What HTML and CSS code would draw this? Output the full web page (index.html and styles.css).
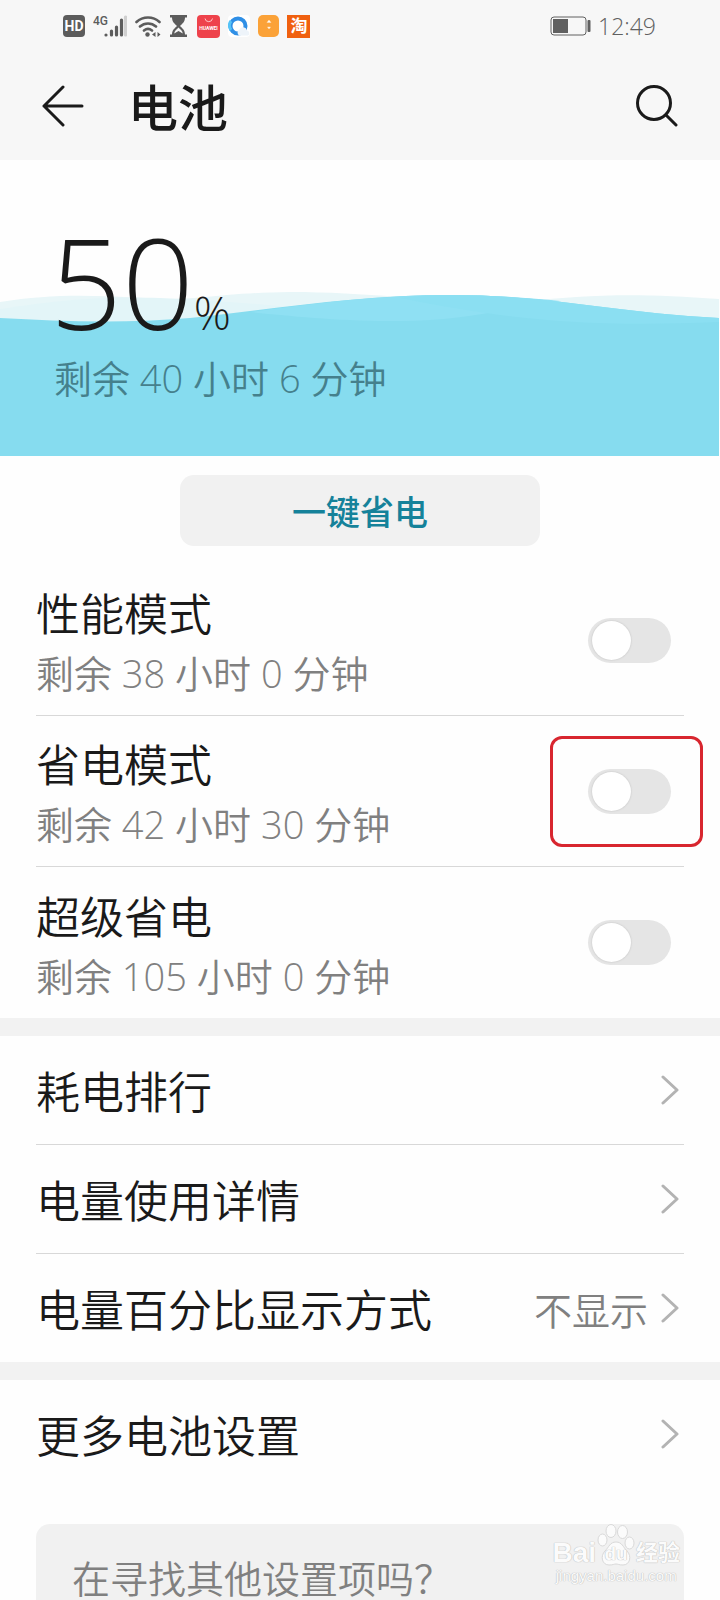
FILE: index.html
```html
<!DOCTYPE html>
<html lang="zh-CN">
<head>
    <meta charset="utf-8">
    <title>电池</title>
    <meta name="viewport" content="width=device-width, initial-scale=1.0">
    <link rel="stylesheet" href="styles.css">
</head>
<body>
<div class="screen">
    <header class="header">
        <div class="statusbar">
            <div class="status-icons">
                <svg width="22" height="24" viewBox="0 0 22 24">
                    <rect y="1" width="22" height="22" rx="4" fill="#5c5c5c"/>
                    <text x="11" y="17" class="hd">HD</text>
                </svg>
                <svg width="34" height="24" viewBox="0 0 34 24">
                    <text x="0" y="11" class="net">4G</text>
                    <g stroke="#5c5c5c" stroke-width="3.200" stroke-linecap="round">
                        <path d="M13 21v0M18.500 21v-4M23.500 21v-8M28.500 21V6"/>
                        <path d="M32.500 21V3" stroke="#cfcfcf"/>
                    </g>
                </svg>
                <svg width="26" height="24" viewBox="0 0 26 24" fill="none" stroke="#5c5c5c" stroke-width="2.600" stroke-linecap="round">
                    <path d="M1.500 8a17 17 0 0 1 23 0M5 12.500a12 12 0 0 1 16 0M9 16.500a6.500 6.500 0 0 1 8 0"/>
                    <circle cx="12.500" cy="20.500" r="2.200" fill="#5c5c5c" stroke="none"/>
                    <path d="M17 20.500l3.500-2.500v5zM25.500 20.500L22.500 18v5z" fill="#5c5c5c" stroke="none"/>
                </svg>
                <svg width="20" height="24" viewBox="0 0 20 24">
                    <path d="M1 1h17v2.500h-2C16 8 13 10 11 12c2 2 5 4 5 8.500h2V23H1v-2.500h2C3 16 6 14 8 12 6 10 3 8 3 3.500H1z" fill="#5c5c5c"/>
                    <path d="M9.500 13.500c2 2 4 3.500 4.300 6L9.500 17l-4.300 2.500c.3-2.500 2.300-4 4.300-6z" fill="#f7f7f7"/>
                </svg>
                <svg width="23" height="24" viewBox="0 0 23 24">
                    <rect width="23" height="23" rx="4" y="1" fill="#ee424b"/>
                    <path d="M8 4.500a3.800 3.800 0 0 0 7.500 0" fill="none" stroke="#ffc4c4"/>
                    <text x="11.500" y="16" class="brand">HUAWEI</text>
                </svg>
                <svg width="22" height="24" viewBox="0 0 22 24">
                    <rect width="22" height="22" y="1" rx="4" fill="#fff"/>
                    <circle cx="10" cy="12" r="7.500" fill="#fff" stroke="#2f8fe6" stroke-width="4"/>
                    <path d="M3 16a7.500 7.500 0 0 1 0-9" fill="none" stroke="#56c3f7" stroke-width="3"/>
                    <path d="M11 21.500a3.500 3.500 0 0 1 .5-6 4 4 0 0 1 7.500 1 2.700 2.700 0 0 1 1 5z" fill="#eef4fa"/>
                </svg>
                <svg width="21" height="24" viewBox="0 0 21 24">
                    <rect width="21" height="22" y="1" rx="5" fill="#fba238"/>
                    <path d="M9 8.500l2-2.500 2 2.500zM9.500 13h3l-1.500 2z" fill="#fff" stroke="#ffe3bd" stroke-width=".5"/>
                </svg>
                <svg width="23" height="24" viewBox="0 0 23 24">
                    <rect width="23" height="23" y="1" fill="#f0600f"/>
                    <text x="12" y="18" class="tao">淘</text>
                </svg>
            </div>
            <div class="status-right">
                <svg width="42" height="20" viewBox="0 0 42 20">
                    <rect x="1" y="1" width="35" height="18" rx="3" fill="none" stroke="#606060"/>
                    <rect x="3" y="3" width="15" height="14" fill="#606060"/>
                    <rect x="37.500" y="4" width="3" height="12" rx="1" fill="#606060"/>
                </svg>
                <span>12:49</span>
            </div>
        </div>
        <div class="titlebar">
            <button class="icon-btn" aria-label="返回">
                <svg width="42" height="42" viewBox="0 0 42 42" fill="none" stroke="#1a1a1a" stroke-width="3" stroke-linecap="round" stroke-linejoin="round">
                    <path d="M40 21H2M21 2L2 21l19 19"/>
                </svg>
            </button>
            <h1>电池</h1>
            <button class="icon-btn" aria-label="搜索">
                <svg width="42" height="42" viewBox="0 0 42 42" fill="none" stroke="#1a1a1a" stroke-width="3" stroke-linecap="round">
                    <circle cx="18" cy="18" r="16.500"/>
                    <path d="M30 30L40 40"/>
                </svg>
            </button>
        </div>
    </header>

    <section class="hero">
        <svg class="waves" viewBox="0 0 720 168" preserveAspectRatio="none">
            <path d="M0 14C50 6 90 7 140 10C200 14 210 5 290 4C370 4 430 14 520 14C590 6 640 5 719 11V60H0z" fill="#e8f6f8"/>
            <path d="M0 21C60 12 100 8 160 10C200 12 240 14 300 20V60H0z" fill="#e3f5f8"/>
            <path d="M0 30C60 33 120 36 190 30C280 20 360 7 450 7C550 7 610 24 719 30V168H0z" fill="#86dcef"/>
            <path d="M250 24C330 13 390 7 450 7C490 7 530 10 560 13C500 22 460 33 400 33C340 33 300 29 250 24z" fill="#8fe0f3"/>
            <path d="M400 10C500 30 580 40 719 34V30C610 24 550 7 450 7C430 7 415 8 400 10z" fill="#8bdff2"/>
        </svg>
        <div class="level">50<span class="unit">%</span></div>
        <p class="remain">剩余 40 小时 6 分钟</p>
    </section>

    <div class="save-wrap">
        <button class="save">一键省电</button>
    </div>

    <section class="group">
        <div class="row mode">
            <label for="perf"><span class="name">性能模式</span><span class="note">剩余 38 小时 0 分钟</span></label>
            <div class="toggle"><input type="checkbox" id="perf"></div>
        </div>
        <div class="row mode">
            <label for="saver"><span class="name">省电模式</span><span class="note">剩余 42 小时 30 分钟</span></label>
            <div class="toggle marked"><input type="checkbox" id="saver"></div>
        </div>
        <div class="row mode">
            <label for="ultra"><span class="name">超级省电</span><span class="note">剩余 105 小时 0 分钟</span></label>
            <div class="toggle"><input type="checkbox" id="ultra"></div>
        </div>
    </section>

    <nav class="group">
        <a class="row link" href="#rank">
            <span class="name">耗电排行</span>
            <svg class="chevron" viewBox="0 0 18 30"><path d="M2 2l14 13L2 28"/></svg>
        </a>
        <a class="row link" href="#usage">
            <span class="name">电量使用详情</span>
            <svg class="chevron" viewBox="0 0 18 30"><path d="M2 2l14 13L2 28"/></svg>
        </a>
        <a class="row link" href="#percent">
            <span class="name">电量百分比显示方式</span>
            <span class="value">不显示</span>
            <svg class="chevron" viewBox="0 0 18 30"><path d="M2 2l14 13L2 28"/></svg>
        </a>
    </nav>

    <nav class="group">
        <a class="row link" href="#more">
            <span class="name">更多电池设置</span>
            <svg class="chevron" viewBox="0 0 18 30"><path d="M2 2l14 13L2 28"/></svg>
        </a>
    </nav>

    <section class="tips">
        <p>在寻找其他设置项吗？</p>
    </section>

    <div class="watermark">
        <div class="wm-top">
            <span class="wm-bai">Bai</span>
            <span class="wm-paw">
                <svg width="38" height="42" viewBox="0 0 38 42" fill="#fbfbfb" stroke="#d9d9d9">
                    <ellipse cx="5.500" cy="16" rx="4.500" ry="6"/>
                    <ellipse cx="14" cy="7" rx="5" ry="6.500"/>
                    <ellipse cx="25.500" cy="8" rx="5" ry="6.500"/>
                    <ellipse cx="32.500" cy="19" rx="4.500" ry="6"/>
                    <path d="M19 18c6 0 7 5 11 9 5 5 3 14-4 14-4 0-5-1-7-1s-3 1-7 1c-7 0-9-9-4-14 4-4 5-9 11-9z"/>
                </svg>
                <span class="wm-du">du</span>
            </span>
            <span class="wm-exp">经验</span>
        </div>
        <div class="wm-url">jingyan.baidu.com</div>
    </div>
</div>
</body>
</html>
```
FILE: styles.css
```css
* {
    box-sizing: border-box;
}
body {
    margin: 0;
    background: #fefefe;
    color: #1a1a1a;
    font-family: "Open Sans", "Noto Sans CJK SC", sans-serif;
    font-weight: 300;
}
h1, p {
    margin: 0;
}
button {
    font-family: inherit;
    border: 0;
    padding: 0;
}
.screen {
    position: relative;
    height: 100vh;
    overflow: hidden;
}

/* header */
.header {
    background: #f7f7f7;
    height: 160px;
}
.statusbar {
    display: flex;
    justify-content: space-between;
    align-items: center;
    height: 52px;
    padding: 0 64px 0 63px;
}
.status-icons {
    display: flex;
    gap: 8px;
}
.status-icons text {
    font-family: "Roboto", "Noto Sans CJK SC", sans-serif;
    font-weight: 700;
    text-anchor: middle;
    fill: #fff;
}
.status-icons .hd {
    font-size: 14px;
}
.status-icons .net {
    font-size: 12px;
    font-weight: 500;
    text-anchor: start;
    fill: #5c5c5c;
}
.status-icons .brand {
    font-size: 5px;
}
.status-icons .tao {
    font-size: 17px;
}
.status-right {
    display: flex;
    align-items: center;
    gap: 6px;
    font-size: 23px;
    color: #606060;
}
.titlebar {
    display: flex;
    align-items: center;
    height: 108px;
    padding: 0 42px;
}
.titlebar h1 {
    flex: 1;
    margin-left: 44px;
    padding-top: 4px;
    font-size: 50px;
    line-height: 104px;
    font-weight: 500;
}
.icon-btn {
    display: flex;
    background: none;
}

/* battery level */
.hero {
    position: relative;
    height: 296px;
    padding: 52px 54px 0;
}
.waves {
    position: absolute;
    left: 0;
    bottom: 0;
    width: 100%;
    height: 168px;
}
.level {
    position: relative;
    margin-left: -4px;
    font-size: 126px;
    line-height: 138px;
}
.unit {
    font-size: 46px;
    line-height: 46px;
}
.remain {
    position: relative;
    font-size: 38px;
    line-height: 56px;
    font-weight: 350;
    color: #45808c;
}
.save-wrap {
    display: flex;
    justify-content: center;
    padding: 19px 0;
}
.save {
    width: 50%;
    height: 71px;
    border-radius: 14px;
    background: #f1f1f1;
    color: #15829a;
    font-size: 34px;
    font-weight: 500;
}

/* list rows */
.group + .group {
    border-top: 18px solid #f2f2f2;
}
.row {
    display: flex;
    align-items: center;
    margin: 0 36px;
    border-bottom: 1px solid #d8d8d8;
}
.row:last-child {
    border-bottom: 0;
}
.mode {
    height: 151px;
}
.mode label {
    flex: 1;
    padding-top: 6px;
}
.name {
    flex: 1;
    display: block;
    font-size: 44px;
    line-height: 60px;
    font-weight: 350;
}
.note {
    display: block;
    font-size: 38px;
    line-height: 58px;
    font-weight: 350;
    color: #808080;
}
.toggle {
    display: flex;
    margin-right: 13px;
}
.toggle input {
    appearance: none;
    width: 83px;
    height: 45px;
    margin: 0;
    padding: 3px 4px;
    border-radius: 23px;
    background: #e5e5e5;
}
.toggle input::before {
    content: "";
    display: block;
    width: 39px;
    height: 39px;
    border-radius: 50%;
    background: #fff;
    box-shadow: 0 0 2px #bbb;
}
.toggle input:checked {
    background: #15829a;
}
.toggle input:checked::before {
    margin-left: auto;
}
.marked {
    margin-right: -19px;
    padding: 30px 29px 30px 35px;
    border: 3px solid #d8262f;
    border-radius: 12px;
}
.link {
    box-sizing: content-box;
    height: 108px;
    color: inherit;
    text-decoration: none;
}
.link .name {
    padding-top: 4px;
}
.value {
    font-size: 38px;
    font-weight: 350;
    color: #808080;
    margin-right: 13px;
}
.chevron {
    width: 18px;
    height: 30px;
    margin-right: 5px;
    fill: none;
    stroke: #b3b3b3;
    stroke-width: 3px;
    stroke-linecap: round;
    stroke-linejoin: round;
}

.tips {
    margin: 36px 36px 0;
    padding: 24px 36px 60px;
    border-radius: 14px;
    background: #f1f1f1;
    color: #808080;
    font-size: 38px;
    line-height: 60px;
    font-weight: 350;
}

/* watermark */
.watermark {
    position: absolute;
    right: 40px;
    bottom: 14px;
    font-family: "Liberation Sans", "Noto Sans CJK SC", sans-serif;
    font-weight: 700;
    color: #fbfbfb;
    text-shadow: 0 0 1px #bbb, 0 0 1px #bbb;
}
.wm-top {
    display: flex;
    align-items: flex-end;
    gap: 1px;
    height: 42px;
    line-height: 26px;
}
.wm-bai {
    font-size: 28px;
}
.wm-paw {
    display: grid;
    justify-items: center;
    align-items: end;
}
.wm-paw > * {
    grid-area: 1 / 1;
}
.wm-du {
    font-size: 19px;
    line-height: 24px;
}
.wm-exp {
    font-size: 22px;
}
.wm-url {
    font-size: 15px;
    line-height: 20px;
    font-weight: 400;
    text-align: center;
}
```
